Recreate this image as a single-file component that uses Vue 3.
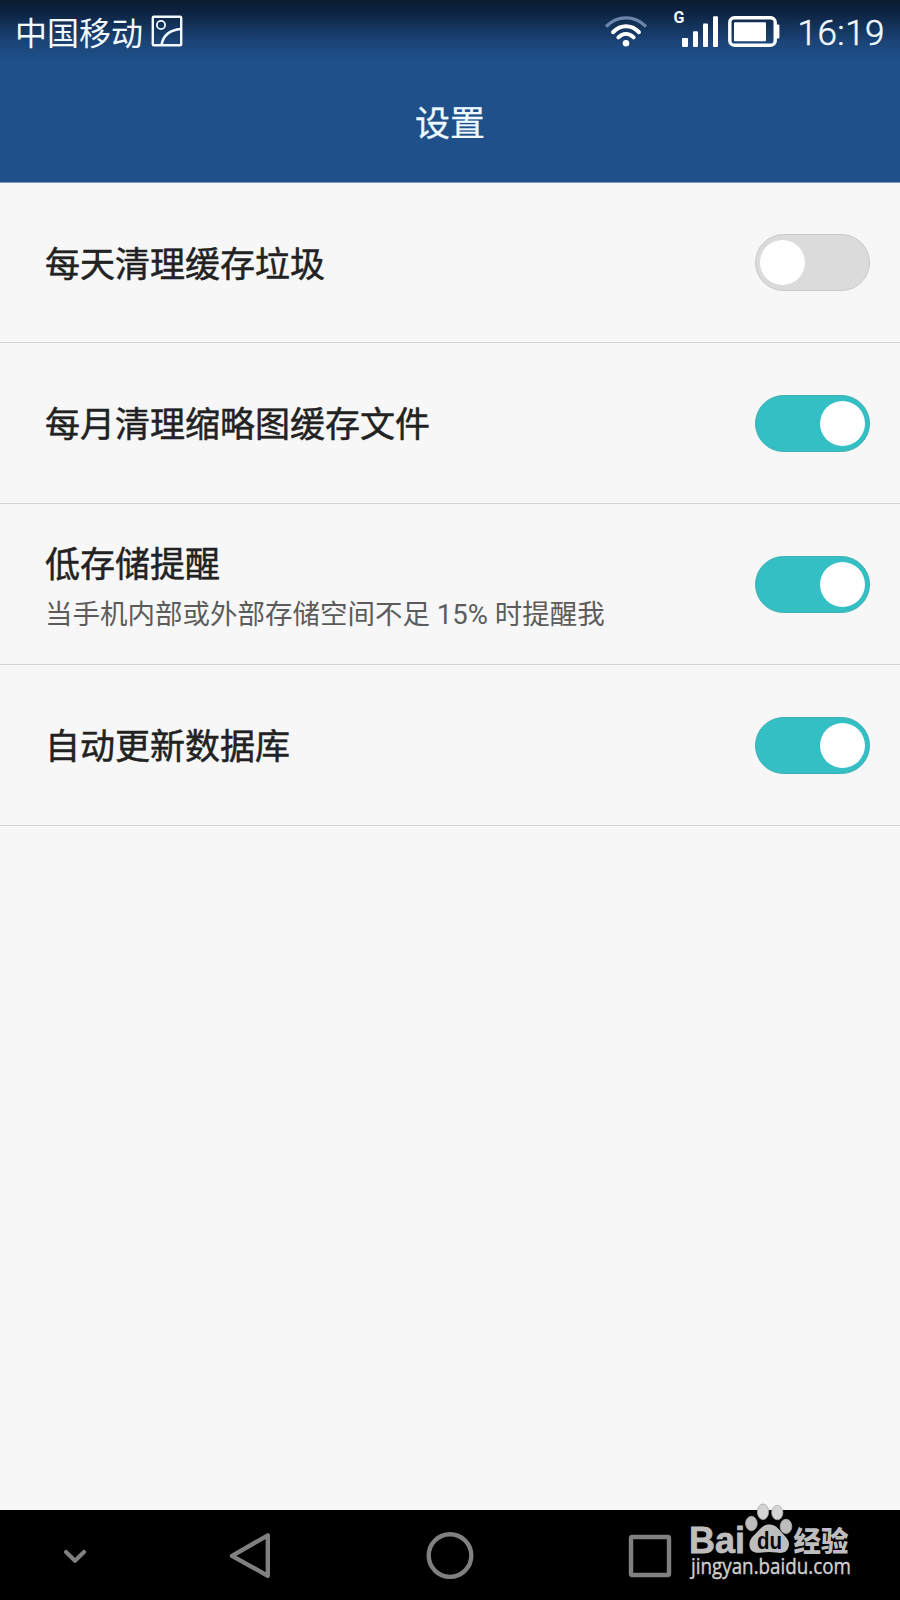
<script setup>
import { ref } from 'vue';

const carrier = '中国移动';
const time = '16:19';

const settings = ref([
  { id: 'daily', title: '每天清理缓存垃圾', enabled: false },
  { id: 'monthly', title: '每月清理缩略图缓存文件', enabled: true },
  { id: 'storage', title: '低存储提醒', summary: '当手机内部或外部存储空间不足 15% 时提醒我', enabled: true },
  { id: 'update', title: '自动更新数据库', enabled: true }
]);

const toggle = (item) => {
  item.enabled = !item.enabled;
};
</script>

<template>
  <div class="screen">
    <header class="header">
      <div class="status-bar">
        <span class="carrier">{{ carrier }}</span>
        <svg class="icon-picture" width="32" height="32" viewBox="0 0 32 32" fill="none" stroke="#f2f9ff">
          <rect x="1.8" y="1.8" width="28.4" height="28.4" rx="1" stroke-width="2.4" />
          <circle cx="10" cy="10" r="4.1" stroke-width="1.8" />
          <path d="M10.5 30C12 21 18 15 30 14" stroke-width="2.6" />
        </svg>
        <div class="status-icons">
          <svg class="icon-wifi" width="44" height="34" viewBox="0 0 44 34" fill="none" stroke="#fff" stroke-width="4" stroke-linecap="round">
            <path d="M2 12.6C13.500 1 30.500 1 42 12.6" stroke="#6c86ab" stroke-width="3.4" stroke-linecap="butt" />
            <path d="M9 18.2C17 10.4 27 10.4 35 18.2" />
            <path d="M14.4 23.4C19 19 25 19 29.6 23.4" />
            <circle cx="22" cy="29.2" r="3.3" fill="#fff" stroke="none" />
          </svg>
          <div class="signal">
            <span class="network">G</span>
            <svg width="38" height="32" viewBox="0 0 38 32" fill="#fff">
              <rect x="1" y="22" width="6" height="9" rx="1" />
              <rect x="12" y="15.2" width="5" height="15.8" rx="1" />
              <rect x="22" y="7.5" width="5" height="23.5" rx="1" />
              <rect x="32" y="0.2" width="5" height="30.8" rx="1" />
            </svg>
          </div>
          <svg class="icon-battery" width="52" height="32" viewBox="0 0 52 32">
            <rect x="1.8" y="1.8" width="45.4" height="27.4" rx="4.5" fill="none" stroke="#fff" stroke-width="3.4" />
            <rect x="6" y="6.2" width="32" height="19" rx="1" fill="#fff" />
            <path d="M48 8.4h2.2q1.2 0 1.2 1.2v11.8q0 1.2-1.2 1.2H48z" fill="#fff" />
          </svg>
          <span class="time">{{ time }}</span>
        </div>
      </div>
      <h1 class="page-title">设置</h1>
    </header>

    <main class="list">
      <div v-for="item in settings" :key="item.id" class="row">
        <div class="row-text" :class="{ double: item.summary }">
          <div class="row-title">{{ item.title }}</div>
          <div v-if="item.summary" class="row-summary">{{ item.summary }}</div>
        </div>
        <button
          class="switch"
          :class="{ on: item.enabled }"
          role="switch"
          :aria-checked="item.enabled"
          @click="toggle(item)"
        >
          <span class="knob"></span>
        </button>
      </div>
    </main>

    <nav class="nav-bar">
      <svg width="900" height="90" viewBox="0 0 900 90" fill="none" stroke="#808080" stroke-linecap="round" stroke-linejoin="round">
        <path d="M66 42l9 8.7 9-8.7" stroke-width="4.2" />
        <path d="M267.8 25.4v40.4L232 45.8z" stroke-width="4.4" />
        <circle cx="450" cy="45.6" r="21.3" stroke-width="4.4" />
        <rect x="631" y="27" width="38" height="38" rx="1.2" stroke-width="4.4" />
      </svg>

      <svg class="watermark" width="180" height="84" viewBox="0 0 180 84">
        <g fill="#bdbdbd">
          <text class="brand" x="9" y="50.5" textLength="56" lengthAdjust="spacingAndGlyphs">Bai</text>
          <g stroke="#aaa" stroke-width="0.8">
            <ellipse cx="71.4" cy="21.5" rx="5.8" ry="7.2" />
            <ellipse cx="83" cy="9.8" rx="5.6" ry="7.8" fill="#d4d4d4" />
            <ellipse cx="97.3" cy="10.6" rx="5.6" ry="7.2" fill="#d4d4d4" />
            <ellipse cx="106" cy="24.4" rx="5.8" ry="7.2" />
          </g>
          <path d="M89 22.5c7 0 10 5 14 9.5 5 5 7 8 5.500 13-1.500 6-7 6.500-12 5.500-5-.8-10-.8-15 0-5 1-10.500 0-11.800-5.500-1.200-5 1-9 5.500-13 4.500-4 7-9.500 13.800-9.500z" />
          <text class="du" x="77" y="47" fill="#080808" textLength="25" lengthAdjust="spacingAndGlyphs">du</text>
          <text class="brand-cn" x="113.500" y="49.5" textLength="55" lengthAdjust="spacingAndGlyphs">经验</text>
          <text class="site" x="11" y="71.8" textLength="160" lengthAdjust="spacingAndGlyphs">jingyan.baidu.com</text>
        </g>
      </svg>
    </nav>
  </div>
</template>

<style>
body {
  margin: 0;
}
</style>

<style scoped>
.screen {
  display: flex;
  flex-direction: column;
  width: 900px;
  height: 1600px;
  overflow: hidden;
  background: #f7f7f7;
  font-family: Roboto, "Noto Sans CJK SC", sans-serif;
  color: #222;
}

.header {
  box-sizing: border-box;
  height: 183px;
  flex: none;
  background: linear-gradient(#0b1b31 0, #0d2341 12px, #1b4477 42px, #1f508a 60px);
  border-bottom: 1px solid #7a97bb;
}

.status-bar {
  display: flex;
  align-items: flex-start;
  height: 64px;
  padding: 0 15px 0 15px;
  color: #f2f9ff;
}

.carrier { font-size: 32px; line-height: 68px; }
.icon-picture { margin: 15px 0 0 8px; }

.status-icons { display: flex; align-items: flex-start; margin-left: auto; }
.icon-wifi { margin-top: 14px; }

.signal { display: flex; margin-left: 24px; }
.network { width: 12px; margin: 10px -4px 0 1px; font-size: 16px; line-height: 16px; font-weight: 700; }
.signal svg { margin-top: 16px; }
.icon-battery { margin: 16px 0 0 9px; }
.time {
  margin-left: 17px;
  font-size: 35px;
  line-height: 67px;
  font-weight: 300;
  letter-spacing: 0.5px;
  -webkit-text-stroke: 0.5px #f2f9ff;
}

.page-title {
  margin: 0;
  padding-top: 2px;
  font-size: 35px;
  line-height: 118px;
  font-weight: 400;
  text-align: center;
  color: #eefaff;
  -webkit-text-stroke: 0.3px #eefaff;
}

.list { flex: 1; }

.row {
  box-sizing: border-box;
  display: flex;
  align-items: center;
  justify-content: space-between;
  height: 161px;
  padding: 0 30px 0 45px;
  border-bottom: 1px solid #d2d2d2;
}

.row:first-child { height: 160px; }

.row-text { padding-top: 6px; }
.row-text.double { padding-top: 10px; }
.row-title { font-size: 35px; line-height: 48px; -webkit-text-stroke: 0.5px #222; }
.row-summary { margin-top: 3px; font-size: 27.5px; line-height: 44px; color: #5c5c5c; }

.switch {
  box-sizing: border-box;
  display: flex;
  align-items: center;
  width: 115px;
  height: 57px;
  padding: 0 4px;
  border: 1px solid #c9c9c9;
  border-radius: 29px;
  background: #dbdbdb;
}

.switch.on { justify-content: flex-end; background: #33bfc4; border-color: #3fb0b4; }
.knob { width: 45px; height: 45px; border-radius: 50%; background: #fff; }

.nav-bar {
  position: relative;
  flex: none;
  height: 90px;
  background: #000;
}

.nav-bar > svg { display: block; }

/* the paw sticks out above the bar */
.nav-bar > .watermark { position: absolute; left: 680px; top: -8px; overflow: visible; }
.brand { font: 700 36px "Liberation Sans", sans-serif; stroke: #bdbdbd; stroke-width: 0.8px; }
.du { font: 700 23px "Liberation Sans", sans-serif; }
.brand-cn { font: 900 28px "Noto Sans CJK SC", sans-serif; }
.site { font: 400 21px "Open Sans", sans-serif; fill: #cfcfcf; stroke: #cfcfcf; stroke-width: 0.4px; }
</style>
